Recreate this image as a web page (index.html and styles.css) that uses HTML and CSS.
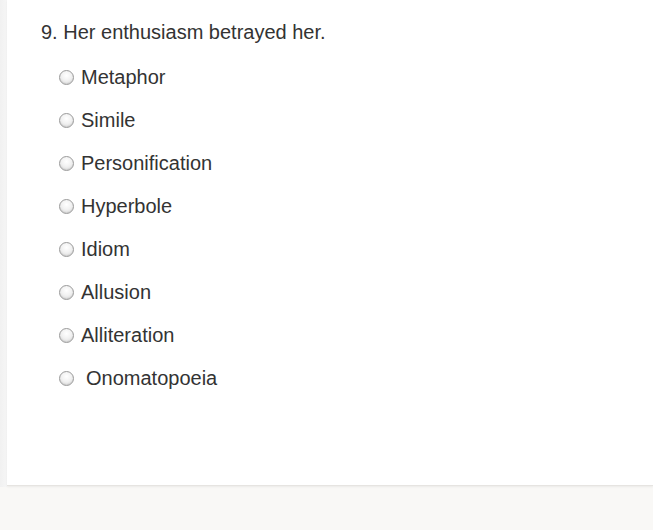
FILE: index.html
```html
<!DOCTYPE html>
<html>
<head>
<meta charset="utf-8">
<link rel="stylesheet" href="styles.css">
</head>
<body>
<div class="page">
  <div class="card">
    <div class="question">9. Her enthusiasm betrayed her.</div>
    <ul class="options">
      <li class="option"><span class="radio"></span><span class="label">Metaphor</span></li>
      <li class="option"><span class="radio"></span><span class="label">Simile</span></li>
      <li class="option"><span class="radio"></span><span class="label">Personification</span></li>
      <li class="option"><span class="radio"></span><span class="label">Hyperbole</span></li>
      <li class="option"><span class="radio"></span><span class="label">Idiom</span></li>
      <li class="option"><span class="radio"></span><span class="label">Allusion</span></li>
      <li class="option"><span class="radio"></span><span class="label">Alliteration</span></li>
      <li class="option"><span class="radio"></span><span class="label wide">Onomatopoeia</span></li>
    </ul>
  </div>
</div>
</body>
</html>
```
FILE: styles.css
```css
html, body {
  margin: 0;
  padding: 0;
  background: #f9f8f6;
  height: 100%;
}
.page {
  padding-left: 7px;
  background: linear-gradient(to right, #f1f1f1 0, #f6f6f6 7px, transparent 7px);
  height: 487px;
  box-sizing: border-box;
}
.card {
  background: #ffffff;
  height: 486px;
  box-sizing: border-box;
  border-bottom: 1px solid #e6e4e1;
  box-shadow: 0 1px 2px rgba(0,0,0,0.06);
  padding: 19px 0 0 34px;
  font-family: "Liberation Sans", Arial, sans-serif;
  font-size: 20px;
  color: #333333;
}
.question {
  line-height: 26px;
  height: 26px;
}
.options {
  list-style: none;
  margin: 0;
  padding: 19px 0 0 18px;
  display: flex;
  flex-direction: column;
  gap: 17px;
}
.option {
  display: flex;
  align-items: center;
  height: 26px;
  line-height: 26px;
}
.radio {
  width: 13px;
  height: 13px;
  border-radius: 50%;
  border: 1px solid #9a9a9a;
  background: radial-gradient(circle at 50% 35%, #ffffff 0, #f2f2f2 45%, #d6d6d6 100%);
  box-shadow: inset 0 -1px 1px rgba(0,0,0,0.08);
  flex: none;
  margin-right: 7px;
}
.label.wide {
  margin-left: 5px;
}
```
